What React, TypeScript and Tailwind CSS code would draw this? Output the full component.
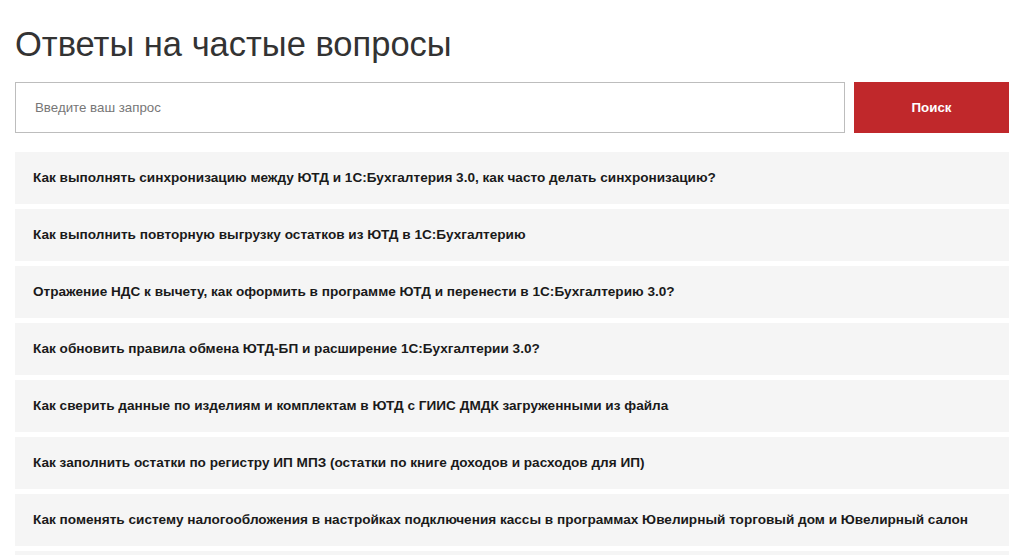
import { useState } from 'react';

const questions = [
  'Как выполнять синхронизацию между ЮТД и 1С:Бухгалтерия 3.0, как часто делать синхронизацию?',
  'Как выполнить повторную выгрузку остатков из ЮТД в 1С:Бухгалтерию',
  'Отражение НДС к вычету, как оформить в программе ЮТД и перенести в 1С:Бухгалтерию 3.0?',
  'Как обновить правила обмена ЮТД-БП и расширение 1С:Бухгалтерии 3.0?',
  'Как сверить данные по изделиям и комплектам в ЮТД с ГИИС ДМДК загруженными из файла',
  'Как заполнить остатки по регистру ИП МПЗ (остатки по книге доходов и расходов для ИП)',
  'Как поменять систему налогообложения в настройках подключения кассы в программах Ювелирный торговый дом и Ювелирный салон',
  'Как загрузить данные из ГИИС ДМДК',
];

export default function App() {
  const [query, setQuery] = useState('');

  return (
    <div
      className="h-[555px] bg-white px-[15px] overflow-hidden"
      style={{ fontFamily: '"Liberation Sans", Arial, sans-serif' }}
    >
      <h1 className="pt-[24px] text-[34.5px] leading-[40px] text-[#333333] font-normal">
        Ответы на частые вопросы
      </h1>

      <form className="mt-[18px] flex gap-[9px]" onSubmit={e => e.preventDefault()}>
        <input
          value={query}
          onChange={e => setQuery(e.target.value)}
          placeholder="Введите ваш запрос"
          className="h-[51px] w-[830px] border border-[#bdbdbd] bg-white px-[19px] text-[13.3px] text-[#333] placeholder:text-[#777777] outline-none"
        />
        <button
          type="submit"
          className="h-[51px] flex-1 bg-[#c0282b] text-[13.3px] font-bold text-white"
        >
          Поиск
        </button>
      </form>

      <div className="mt-[19px] flex flex-col gap-[5px]">
        {questions.map(q => (
          <div
            key={q}
            className="flex h-[52px] shrink-0 items-center bg-[#f5f5f5] pl-[18px] text-[13.6px] font-bold text-[#1a1a1a]"
          >
            {q}
          </div>
        ))}
      </div>
    </div>
  );
}
